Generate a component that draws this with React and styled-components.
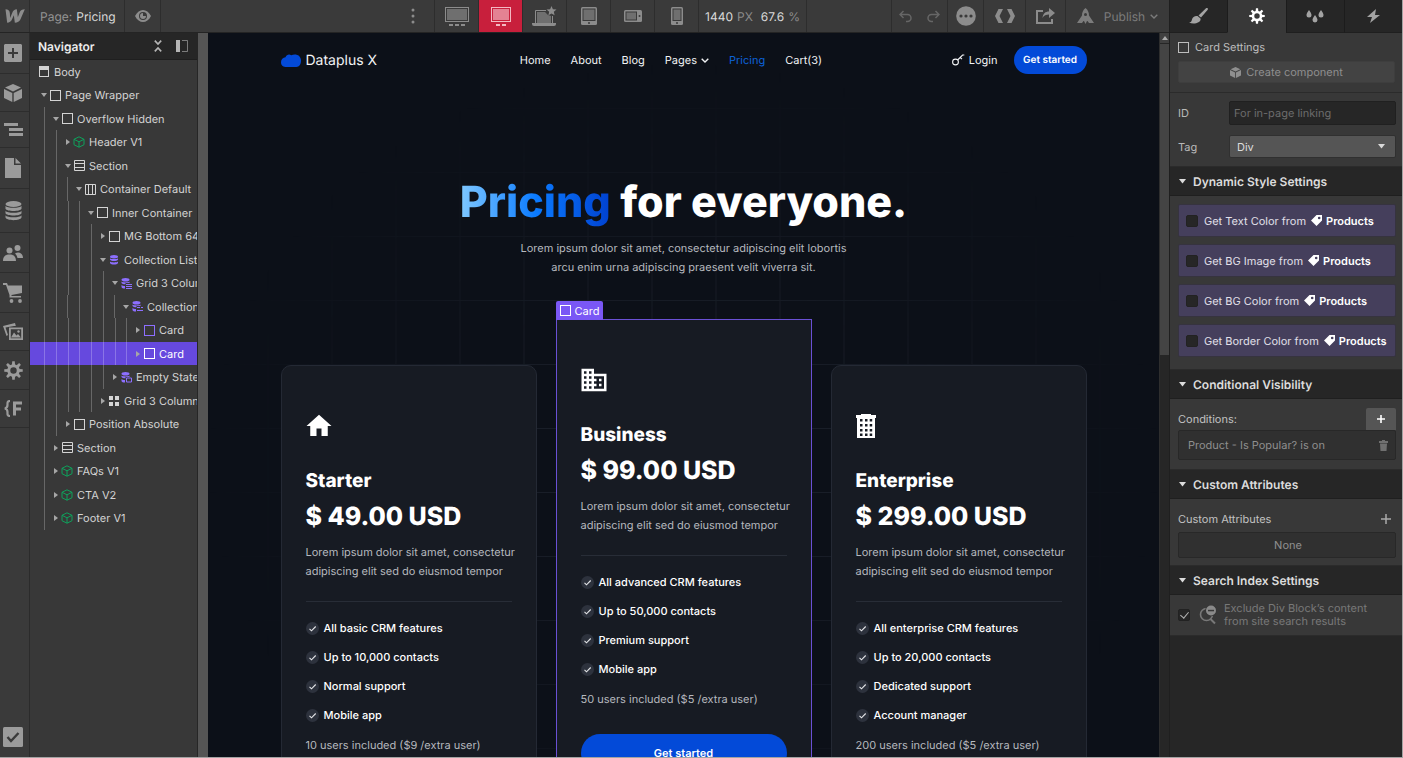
import React from "react"
import styled, { createGlobalStyle, css } from "styled-components"
import { MdHome, MdBusiness } from "react-icons/md"

const GlobalStyle = createGlobalStyle`
  * {
    box-sizing: border-box;
  }

  body {
    margin: 0;
    background-color: #a3a3a3;
    font-family: Inter, "Liberation Sans", sans-serif;
    font-size: 11px;
    color: #d9d9d9;
    text-rendering: geometricPrecision;
  }

  button,
  input,
  select {
    font-family: inherit;
    font-size: inherit;
    color: inherit;
    margin: 0;
    text-rendering: inherit;
  }

  svg {
    display: block;
    flex-shrink: 0;
  }
`

const plainButton = css`
  display: flex;
  align-items: center;
  justify-content: center;
  padding: 0;
  border: 0;
  background: none;
  cursor: pointer;
`

const Shell = styled.div`
  display: flex;
  height: 100vh;
  padding: 0 1px 1px 0;
  overflow: hidden;
`

const Main = styled.div`
  flex: 1;
  min-width: 0;
  display: flex;
  flex-direction: column;
`

const Workspace = styled.div`
  flex: 1;
  min-height: 0;
  display: flex;
`

/* Top bar */

const TopBar = styled.header`
  display: flex;
  height: 33px;
  background-color: #3a3a3a;
  border-bottom: 1px solid #242424;
`

const TopButton = styled.button`
  ${plainButton}
  width: ${(props) => props.$width}px;
  gap: 8px;
  color: ${(props) => (props.$active ? "#f3b8c2" : "#8c8c8c")};
  background-color: ${(props) => (props.$active ? "#c81f3c" : "transparent")};
  border-right: 1px solid #2d2d2d;
`

const PageName = styled.div`
  display: flex;
  align-items: center;
  gap: 4px;
  width: 95px;
  padding-left: 10px;
  font-size: 12px;
  color: #949494;
  border-right: 1px solid #2d2d2d;

  & strong {
    font-weight: 400;
    color: #d9d9d9;
  }
`

const TopSpace = styled.div`
  flex: 1;
  display: flex;
  justify-content: flex-end;
  border-right: 1px solid #2d2d2d;
`

const MoreButton = styled.button`
  ${plainButton}
  width: 43px;
  color: #8c8c8c;
`

const TopGap = styled.div`
  width: 85px;
  border-right: 1px solid #2d2d2d;
`

const Dimensions = styled.div`
  display: flex;
  align-items: center;
  justify-content: center;
  gap: 4px;
  width: 108px;
  font-size: 12px;
  color: #d9d9d9;
  border-right: 1px solid #2d2d2d;

  & span {
    color: #8c8c8c;
  }

  & span + b {
    margin-left: 4px;
  }

  & b {
    font-weight: 400;
  }
`

const History = styled.div`
  display: flex;
  width: 56px;
  border-right: 1px solid #2d2d2d;
`

const HistoryButton = styled.button`
  ${plainButton}
  flex: 1;
  color: #666;
`

const PublishButton = styled.button`
  ${plainButton}
  gap: 5px;
  width: 103px;
  font-size: 12px;
  color: #7c7c7c;

  & span {
    margin-left: 5px;
  }
`

/* Left rail */

const Rail = styled.nav`
  display: flex;
  flex-direction: column;
  width: 30px;
  background-color: #3a3a3a;
  border-right: 1px solid #2b2b2b;
`

const RailButton = styled.button`
  ${plainButton}
  height: ${(props) => props.$height}px;
  padding-right: 3px;
  color: #9b9b9b;
  border-bottom: ${(props) => (props.$last ? "0" : "1px solid #2d2d2d")};
`

const RailSpace = styled.div`
  flex: 1;
`

/* Navigator */

const Navigator = styled.aside`
  width: 168px;
  background-color: #383838;
  border-right: 1px solid #262626;
  overflow: hidden;
`

const NavigatorHeader = styled.div`
  display: flex;
  align-items: center;
  height: 27px;
  padding: 0 9px 0 8px;
  background-color: #262626;
  border-bottom: 1px solid #1f1f1f;
`

const NavigatorTitle = styled.h2`
  flex: 1;
  margin: 0;
  font-size: 12px;
  font-weight: 600;
  color: #ececec;
`

const NavigatorTools = styled.div`
  display: flex;
  gap: 14px;

  & button {
    ${plainButton}
    color: #b5b5b5;
  }
`

const Tree = styled.ul`
  margin: 0;
  padding: 0;
  list-style: none;
`

const TreeRow = styled.li`
  display: flex;
  align-items: center;
  height: 23px;
  padding-left: ${(props) => (props.$depth ? 11 : 8)}px;
  white-space: nowrap;
  background-color: ${(props) => (props.$selected ? "#6649de" : "transparent")};
  color: ${(props) => (props.$selected ? "#fff" : "#d4d4d4")};
  cursor: default;

  &:nth-child(even) {
    height: 24px;
  }
`

const Guides = styled.span`
  display: flex;
  flex-shrink: 0;
  align-self: stretch;
  width: ${(props) => Math.round((props.$count * 47) / 4)}px;
`

const Guide = styled.span`
  flex: 1;

  &::before {
    content: "";
    display: block;
    width: 1px;
    height: 100%;
    margin-left: 3px;
    background-color: rgba(255, 255, 255, 0.24);
  }
`

const Caret = styled.span`
  display: flex;
  flex-shrink: 0;
  justify-content: center;
  width: 6px;
  margin-right: 2px;
  color: #a6a6a6;
`

const TreeIcon = styled.span`
  display: flex;
  flex-shrink: 0;
  justify-content: center;
  width: 12px;
  margin-right: 4px;
  color: ${(props) => props.$color || "inherit"};
`

const Gutter = styled.div`
  width: 10px;
  background-color: #555;
`

/* Canvas */

const Canvas = styled.main`
  position: relative;
  flex: 1;
  min-width: 0;
  overflow: hidden;
  background-color: #0c1018;
  color: #fff;

  &::before {
    content: "";
    position: absolute;
    inset: 0;
    background-image: linear-gradient(to right, #191e28 1px, transparent 1px),
      linear-gradient(to bottom, #191e28 1px, transparent 1px);
    background-size: 64px 64px;
    background-position: 50% 11px;
    mask-image: radial-gradient(
      ellipse 500px 420px at 50% 430px,
      #000 30%,
      transparent 95%
    );
  }
`

const Site = styled.div`
  position: relative;
  max-width: 806px;
  margin: 0 auto;
`

const SiteHeader = styled.header`
  display: flex;
  align-items: center;
  justify-content: space-between;
  height: 54px;
`

const Logo = styled.a`
  display: flex;
  align-items: center;
  gap: 5px;
  font-size: 14px;
  color: #f2f3f5;
  text-decoration: none;
`

const SiteNav = styled.nav`
  display: flex;
  gap: 20px;
  margin-left: 13px;
`

const SiteLink = styled.a`
  display: flex;
  align-items: center;
  gap: 4px;
  font-size: 11px;
  color: ${(props) => (props.$current ? "#0d62d8" : "#f2f3f5")};
  text-decoration: none;
`

const SiteActions = styled.div`
  display: flex;
  align-items: center;
  gap: 16px;
`

const PillButton = styled.button`
  ${plainButton}
  width: ${(props) => (props.$wide ? "100%" : "73px")};
  height: ${(props) => (props.$wide ? 38 : 28)}px;
  border-radius: 40px;
  background-color: #034ad8;
  color: #fff;
  font-size: ${(props) => (props.$wide ? 11 : 10)}px;
  font-weight: 600;
`

const Hero = styled.section`
  padding-top: 88px;
  text-align: center;
`

const HeroTitle = styled.h1`
  margin: 0;
  font-size: 43px;
  font-weight: 800;
  line-height: 54px;

  & span {
    background-image: linear-gradient(
      to right,
      #7fc8ff,
      #0b7bff 50%,
      #0041d0
    );
    background-clip: text;
    color: transparent;
  }
`

const HeroText = styled.p`
  max-width: 330px;
  margin: 10px auto 0;
  font-size: 11px;
  line-height: 19px;
  color: #b6b9bf;
`

const Cards = styled.section`
  display: grid;
  grid-template-columns: repeat(3, 1fr);
  align-items: start;
  gap: 19px;
  margin-top: 42px;
`

const Card = styled.article`
  position: relative;
  margin-top: ${(props) => (props.$selected ? 0 : 46)}px;
  padding: 44px 24px 40px;
  background-color: #171b23;
  border: 1px solid ${(props) => (props.$selected ? "#6a50d4" : "#242934")};
  border-radius: ${(props) => (props.$selected ? 0 : 10)}px;
`

const SelectionLabel = styled.div`
  position: absolute;
  left: -1px;
  bottom: 100%;
  display: flex;
  align-items: center;
  gap: 4px;
  height: 19px;
  padding: 0 4px;
  background-color: #7a57f5;
  border-radius: 2px 2px 0 0;
  font-size: 11px;
`

const PlanIcon = styled.div`
  display: flex;
  align-items: center;
  height: 32px;
  margin-left: -${(props) => props.$bleed}px;
`

const PlanName = styled.h2`
  margin: 25px 0 0;
  font-size: 19px;
  font-weight: 800;
  line-height: 28px;
`

const PlanPrice = styled.div`
  margin-top: 2px;
  font-size: 25px;
  font-weight: 800;
  line-height: 40px;
`

const PlanText = styled.p`
  margin: 6px -12px 0 0;
  line-height: 19px;
  color: #b6b9bf;
`

const Divider = styled.hr`
  height: 1px;
  margin: 20px 0 18px;
  border: 0;
  background-color: #282d37;
`

const Features = styled.ul`
  display: grid;
  gap: 13px;
  margin: 0;
  padding: 0;
  list-style: none;
`

const Feature = styled.li`
  display: flex;
  align-items: center;
  gap: 5px;
  line-height: 16px;
  font-weight: 500;
`

const PlanUsers = styled.p`
  margin: 13px 0 25px;
  line-height: 19px;
  color: #b6b9bf;
`

const Scrollbar = styled.div`
  display: flex;
  flex-direction: column;
  width: 10px;
  background-color: #262626;
  border-left: 1px solid #2e2e2e;
`

const ScrollArrow = styled.div`
  display: flex;
  align-items: center;
  justify-content: center;
  height: 11px;
  color: #aaa;
  background-color: #404040;
  border-bottom: 1px solid #262626;
`

const ScrollThumb = styled.div`
  height: 43%;
  background-color: #444;
`

/* Settings panel */

const Settings = styled.aside`
  display: flex;
  flex-direction: column;
  width: 233px;
  background-color: #262626;
  border-left: 1px solid #1f1f1f;
`

const Tabs = styled.div`
  display: flex;
  height: 33px;
`

const Tab = styled.button`
  ${plainButton}
  flex: 1;
  color: ${(props) => (props.$active ? "#fff" : "#a3a3a3")};
  background-color: ${(props) => (props.$active ? "#383838" : "#262626")};
  border-bottom: 1px solid ${(props) => (props.$active ? "#383838" : "#1f1f1f")};

  & + & {
    border-left: 1px solid #1c1c1c;
  }
`

const Panel = styled.div`
  padding: ${(props) => props.$pad};
  background-color: #383838;
  border-bottom: 1px solid #2b2b2b;
`

const PanelTitle = styled.div`
  display: flex;
  align-items: center;
  gap: 6px;
  height: 14px;
  color: #bdbdbd;
`

const CreateButton = styled.button`
  ${plainButton}
  gap: 5px;
  width: 100%;
  height: 22px;
  margin-top: 7px;
  color: #8f8f8f;
  background-color: #434343;
  border: 1px solid #3e3e3e;
  border-radius: 2px;
`

const Field = styled.div`
  display: grid;
  grid-template-columns: 51px 1fr;
  align-items: center;

  & + & {
    margin-top: 10px;
  }

  & label {
    color: #b8b8b8;
  }
`

const TextInput = styled.input`
  width: 100%;
  height: 24px;
  padding: 0 4px;
  background-color: #262626;
  border: 1px solid #202020;
  border-radius: 2px;

  &::placeholder {
    color: #6c6c6c;
  }
`

const SelectBox = styled.div`
  display: grid;
  grid-template-columns: 1fr 18px;
  align-items: center;

  & select {
    grid-area: 1 / 1 / 2 / 3;
    width: 100%;
    height: 23px;
    padding: 0 7px;
    appearance: none;
    background-color: #555;
    border: 1px solid #303030;
    border-radius: 2px;
    color: #dcdcdc;
  }

  & svg {
    grid-area: 1 / 2 / 2 / 3;
    pointer-events: none;
  }
`

const SectionHeader = styled.button`
  ${plainButton}
  justify-content: flex-start;
  gap: 7px;
  width: 100%;
  height: 29px;
  padding-left: 9px;
  background-color: #262626;
  border-bottom: 1px solid #1f1f1f;
  font-size: 12px;
  font-weight: 600;
  color: #dcdcdc;
`

const StyleRows = styled.div`
  display: grid;
  gap: 7px;
`

const StyleRow = styled.label`
  display: flex;
  align-items: center;
  height: 33px;
  padding-left: 7px;
  background-color: #453f5c;
  border: 1px solid #36333f;
  border-radius: 2px;
  color: #e2e0ea;

  & svg {
    margin: 0 4px 0 5px;
    color: #fff;
  }

  & strong {
    font-weight: 600;
    color: #fff;
  }
`

const Checkbox = styled.input`
  display: flex;
  align-items: center;
  justify-content: center;
  flex-shrink: 0;
  width: 12px;
  height: 12px;
  margin-right: 6px;
  appearance: none;
  background-color: #262626;
  border: 1px solid #222;
  border-radius: 2px;

  &:checked::after {
    content: "";
    width: 4px;
    height: 7px;
    border: solid #b5b5b5;
    border-width: 0 1px 1px 0;
    transform: translateY(-1px) rotate(40deg);
  }
`

const LabelRow = styled.div`
  display: flex;
  align-items: center;
  justify-content: space-between;
  height: 22px;
  color: #c2c2c2;
`

const AddButton = styled.button`
  ${plainButton}
  width: ${(props) => (props.$filled ? 30 : 20)}px;
  height: 22px;
  background-color: ${(props) => (props.$filled ? "#555" : "transparent")};
  border-radius: 2px 2px 0 0;
  color: ${(props) => (props.$filled ? "#fff" : "#a9a9a9")};
`

const Well = styled.div`
  display: flex;
  align-items: center;
  justify-content: ${(props) => (props.$center ? "center" : "space-between")};
  height: ${(props) => (props.$center ? 26 : 30)}px;
  margin-top: ${(props) => (props.$center ? 2 : 0)}px;
  padding: 0 7px 0 9px;
  background-color: #303030;
  border: 1px solid #282828;
  border-radius: 2px;
  color: #8f8f8f;

  & button {
    ${plainButton}
    color: #707070;
  }
`

const Exclude = styled.label`
  display: flex;
  align-items: center;
  line-height: 13px;
  color: #787878;

  & svg {
    margin: 0 7px 0 3px;
  }
`

/* Icons */

const Icon = ({ w, h = w, box, children }) => (
  <svg
    width={w}
    height={h}
    viewBox={box || `0 0 ${w} ${h}`}
    fill="currentColor"
    aria-hidden="true"
  >
    {children}
  </svg>
)

const WIcon = () => (
  <Icon w={20} h={14} box="14 29 59 42">
    <path d="M15 30C23 30 27 34 28 41L29 56L35 41C38 34 42 30 49 30L52 54L57 40C60 33 65 30 73 30L60 60C57 67 51 70 43 70L40 48L35 59C32 67 26 70 20 70Z" />
  </Icon>
)

const EyeIcon = () => (
  <Icon w={16} h={12}>
    <path
      fillRule="evenodd"
      d="M0 6C2 2 5 0 8 0s6 2 8 6c-2 4-5 6-8 6S2 10 0 6Zm8-4a4 4 0 1 0 0 8 4 4 0 0 0 0-8Z"
    />
    <path d="M8 3a3 3 0 1 0 3 3H8Z" />
  </Icon>
)

const DotsIcon = () => (
  <Icon w={4} h={16}>
    <circle cx="2" cy="2" r="1.5" />
    <circle cx="2" cy="8" r="1.5" />
    <circle cx="2" cy="14" r="1.5" />
  </Icon>
)

const Screen = ({ w, h }) => (
  <>
    <rect
      x=".5"
      y=".5"
      width={w - 1}
      height={h - 1}
      fill="none"
      stroke="currentColor"
    />
    <rect x="2" y="2" width={w - 4} height={h - 4} opacity=".65" />
  </>
)

const WideIcon = () => (
  <Icon w={24} h={19}>
    <Screen w={24} h={15} />
    <path d="M4 17h4v2H4zM10 17h4v2h-4zM16 17h4v2h-4z" />
  </Icon>
)

const DesktopIcon = () => (
  <Icon w={20} h={19}>
    <Screen w={20} h={15} />
    <path d="M5 17h4v2H5zM11 17h4v2h-4z" />
  </Icon>
)

const LaptopIcon = () => (
  <Icon w={25} h={21}>
    <path d="M3.5 17V4.5H14M20.5 10v7" fill="none" stroke="currentColor" />
    <path d="M5 6h8l3 3 3 1v7H5z" opacity=".65" />
    <path d="M0 17h24v1a2 2 0 0 1-2 2H2a2 2 0 0 1-2-2z" />
    <path d="m19.5 0 1.4 3.2 3.6.3-2.7 2.3.8 3.5-3.1-1.9-3.1 1.9.8-3.5-2.7-2.3 3.6-.3z" />
  </Icon>
)

const TabletIcon = () => (
  <Icon w={16} h={18}>
    <rect width="16" height="18" rx="1.5" />
    <rect x="1.5" y="1.5" width="13" height="12.5" fill="#3a3a3a" />
    <rect x="2.5" y="2.5" width="11" height="10.5" opacity=".65" />
    <circle cx="8" cy="15.9" r="1" fill="#3a3a3a" />
  </Icon>
)

const LandscapeIcon = () => (
  <Icon w={18} h={12}>
    <rect width="18" height="12" rx="1.5" />
    <rect x="1.5" y="1.5" width="11.5" height="9" fill="#3a3a3a" />
    <rect x="2.5" y="2.5" width="9.5" height="7" opacity=".65" />
    <circle cx="15.5" cy="6" r="1" fill="#3a3a3a" />
  </Icon>
)

const PhoneIcon = () => (
  <Icon w={12} h={18}>
    <rect width="12" height="18" rx="1.5" />
    <rect x="1.5" y="1.5" width="9" height="12.5" fill="#3a3a3a" />
    <rect x="2.5" y="2.5" width="7" height="10.5" opacity=".65" />
    <circle cx="6" cy="15.9" r="1" fill="#3a3a3a" />
  </Icon>
)

const UndoIcon = ({ flip }) => (
  <Icon w={13} h={13}>
    <g transform={flip ? "translate(13 0) scale(-1 1)" : undefined}>
      <path
        d="M4.5 1 1 4.5 4.5 8M1.5 4.5h7a3.5 3.5 0 0 1 0 7H7"
        fill="none"
        stroke="currentColor"
        strokeWidth="1.5"
      />
    </g>
  </Icon>
)

const ChatIcon = () => (
  <Icon w={20}>
    <circle cx="10" cy="10" r="9.8" />
    <circle cx="5" cy="10" r="1.6" fill="#3a3a3a" />
    <circle cx="10" cy="10" r="1.6" fill="#3a3a3a" />
    <circle cx="15" cy="10" r="1.6" fill="#3a3a3a" />
  </Icon>
)

const CodeIcon = () => (
  <Icon w={20} h={14}>
    <path d="M3.5 0H8L4.500 7 8 14H3.500L0 7zM16.500 0H12l3.500 7-3.500 7h4.500L20 7z" />
  </Icon>
)

const ExportIcon = () => (
  <Icon w={19} h={16}>
    <path
      d="M7 3H1v12h15v-4"
      fill="none"
      stroke="currentColor"
      strokeWidth="2"
    />
    <path d="M13 0l6 5-6 5V6.5c-3 0-5 .5-6.5 3.5C7 5.5 9.5 3.5 13 3.5z" />
  </Icon>
)

const RocketIcon = () => (
  <Icon w={17} h={16}>
    <path
      fillRule="evenodd"
      d="M8.5 0C11 2 12 4.5 12 7.5l5 7.5h-5l-1.5-2h-4L5 15H0l5-7.5C5 4.5 6 2 8.5 0Zm0 5a1.5 1.5 0 1 0 0 3 1.5 1.5 0 0 0 0-3Z"
    />
    <path d="M7 13h3l-1.5 3z" />
  </Icon>
)

const ChevronIcon = () => (
  <Icon w={8} h={5}>
    <path
      d="m.7.7 3.3 3.3L7.3.7"
      fill="none"
      stroke="currentColor"
      strokeWidth="1.4"
    />
  </Icon>
)

const AddIcon = () => (
  <Icon w={18}>
    <path
      fillRule="evenodd"
      d="M1 0h16l1 1v16l-1 1H1l-1-1V1zm7 4v4H4v2h4v4h2v-4h4V8h-4V4z"
    />
  </Icon>
)

const BoxIcon = ({ size = 18 }) => (
  <Icon w={size} box="0 0 18 18">
    <path d="M9 0l8 3.5L9 7.5 1 3.5zM0 5l8.300 4v9L0 14zM18 5l-8.300 4v9L18 14z" />
  </Icon>
)

const LinesIcon = () => (
  <Icon w={19} h={13}>
    <path d="M0 0h14v3H0zM5 5h14v3H5zM5 10h14v3H5z" />
  </Icon>
)

const FileIcon = () => (
  <Icon w={16} h={20}>
    <path d="M0 0h9v7h7v13H0zM10.5 0 16 5.5h-5.5z" />
  </Icon>
)

const DatabaseIcon = () => (
  <Icon w={17} h={20}>
    <ellipse cx="8.5" cy="3" rx="8" ry="3" />
    <path d="M.5 4.8c1.5 2.7 14.5 2.7 16 0v3c-1 3-15 3-16 0zM.5 9.8c1.5 2.7 14.5 2.7 16 0v2.5c-1 3-15 3-16 0zM.5 14.3c1.5 2.7 14.5 2.7 16 0v2.2c-1 3.500-15 3.500-16 0z" />
  </Icon>
)

const UsersIcon = () => (
  <Icon w={20} h={16}>
    <circle cx="6.5" cy="5.5" r="3" />
    <circle cx="14.5" cy="3" r="3" />
    <path d="M0 16c0-4.5 2.5-6.5 6.5-6.5S13 11.5 13 16zM12 8.5c4-2.5 8 0 8 4.5h-5.5c-.4-1.8-1.2-3.4-2.5-4.5z" />
  </Icon>
)

const CartIcon = () => (
  <Icon w={20} h={20}>
    <path d="M0 0h4l1 2.5h14V10l-10.5 2v1H18v1.5H6.500V12L3 2H0z" />
    <circle cx="8.5" cy="18" r="1.9" />
    <circle cx="17" cy="18" r="1.9" />
  </Icon>
)

const ImagesIcon = () => (
  <Icon w={20} h={17}>
    <path d="M0 3 12 0l.8 3H11L2.5 4.5 5 12l-1.5 1z" />
    <path fillRule="evenodd" d="M6 4.5h14V17H6zm1.8 1.8v8.9h10.4V6.3z" />
    <path d="M8 14.5l3-5 2.5 3 1.5-1.5 3 3.5z" />
    <circle cx="15.5" cy="8.5" r="1.2" />
  </Icon>
)

const GearIcon = ({ size = 19 }) => (
  <Icon w={size} box="0 0 20 20">
    <circle
      cx="10"
      cy="10"
      r="5"
      fill="none"
      stroke="currentColor"
      strokeWidth="3.2"
    />
    {[0, 45, 90, 135, 180, 225, 270, 315].map((angle) => (
      <path
        key={angle}
        d="M8.3 4.5 8.7.3h2.6l.4 4.2z"
        transform={`rotate(${angle} 10 10)`}
      />
    ))}
  </Icon>
)

const FinsweetIcon = () => (
  <Icon w={19} h={17}>
    <path
      d="M6 1C3 1 3.5 3 3.5 5S3 8 .8 8.5C3 9 3.5 10 3.5 12S3 16 6 16"
      fill="none"
      stroke="currentColor"
      strokeWidth="2.2"
    />
    <path d="M9 1.5h9v3h-6v3h5v3h-5v5H9z" />
  </Icon>
)

const AuditIcon = () => (
  <Icon w={20}>
    <rect width="20" height="20" rx="1.5" />
    <path
      d="m4.5 10 3.5 4 7.5-8"
      fill="none"
      stroke="#3a3a3a"
      strokeWidth="2.4"
    />
  </Icon>
)

const CollapseIcon = () => (
  <Icon w={8} h={12}>
    <path
      d="M.8.6 4 4 7.2.6M.8 11.4 4 8l3.2 3.4"
      fill="none"
      stroke="currentColor"
      strokeWidth="1.6"
    />
  </Icon>
)

const PinIcon = () => (
  <Icon w={12}>
    <path d="M0 0h4v12H0z" />
    <path d="M6 .5h5.5v11H6" fill="none" stroke="currentColor" opacity=".6" />
  </Icon>
)

const CaretIcon = ({ open }) => (
  <Icon w={open ? 6 : 4} h={open ? 4 : 6}>
    <path d={open ? "M0 0h6L3 4z" : "M0 0v6l4-3z"} />
  </Icon>
)

const TriangleIcon = () => (
  <Icon w={7} h={5}>
    <path d="M0 0h7L3.500 4.500z" />
  </Icon>
)

const SquareIcon = () => (
  <Icon w={11}>
    <rect
      x=".5"
      y=".5"
      width="10"
      height="10"
      fill="none"
      stroke="currentColor"
    />
  </Icon>
)

const BodyIcon = () => (
  <Icon w={10} h={11}>
    <rect
      x=".5"
      y=".5"
      width="9"
      height="10"
      fill="none"
      stroke="currentColor"
    />
    <path d="M0 0h2v1h1V0h2v1h1V0h4v4H0z" />
  </Icon>
)

const SectionIcon = () => (
  <Icon w={11}>
    <path
      d="M.5.5h10v10H.5zM.5 3.5h10M.5 7.5h10"
      fill="none"
      stroke="currentColor"
    />
  </Icon>
)

const ContainerIcon = () => (
  <Icon w={11}>
    <path
      d="M.5.5h10v10H.5zM3.5.5v10M7.5.5v10"
      fill="none"
      stroke="currentColor"
    />
  </Icon>
)

const ComponentIcon = () => (
  <Icon w={12}>
    <path
      d="M6 .8 11 3.3v5.4L6 11.2 1 8.700V3.3zM1 3.3l5 2.5 5-2.5M6 5.8v5.4"
      fill="none"
      stroke="currentColor"
      strokeLinejoin="round"
    />
  </Icon>
)

const ListIcon = () => (
  <Icon w={10}>
    <ellipse cx="5" cy="1.7" rx="4" ry="1.7" />
    <path d="M1 3.2c1 1.2 7 1.2 8 0v1.6c-1 1.6-7 1.6-8 0zM1 6.5c1 1.2 7 1.2 8 0v1.6c-1 2-7 2-8 0z" />
  </Icon>
)

const ListPartIcon = ({ part }) => (
  <Icon w={11}>
    <ellipse cx="4.5" cy="1.8" rx="4" ry="1.8" />
    <path d="M.5 3.5c1 1.2 7 1.2 8 0V5h-4v1.3c-2 0-3.5-.4-4-1.3zM.5 7c.8.8 2 1 3.5 1v2.5C2 10.5.8 10 .5 9z" />
    {part === "lines" && <path d="M5 6h6v1H5zM5 8h6v1H5zM5 10h6v1H5z" />}
    {part === "item" && <path d="M5 6h3v1H5zM5 9h6v1H5zM9 6h2v1H9z" />}
    {part === "empty" && (
      <path d="M5.500 6h5v4h-5z" fill="#383838" stroke="currentColor" />
    )}
  </Icon>
)

const GridIcon = () => (
  <Icon w={10}>
    <path d="M0 0h4v4H0zM6 0h4v4H6zM0 6h4v4H0zM6 6h4v4H6z" />
  </Icon>
)

const CloudIcon = () => (
  <Icon w={20} h={13}>
    <path
      fill="#034ad8"
      d="M4.5 3.2C5.5.8 8-.2 10.2 1.2 14.5-.8 20 1 20 6.5S17 13 14.5 13h-9C2.5 13 0 11.5 0 8.2 0 5.5 2 3.5 4.5 3.2Z"
    />
  </Icon>
)

const KeyIcon = () => (
  <Icon w={13} h={12}>
    <g fill="none" stroke="currentColor" strokeWidth="1.1">
      <circle cx="3.5" cy="8" r="2.9" />
      <path d="m5.600 6 5-5h1.700M8.200 3.500l1.800 1.600" />
    </g>
  </Icon>
)

const TowerIcon = () => (
  <Icon w={20} h={24}>
    <path
      fillRule="evenodd"
      d="M5 0h10v1h5v3h-1v20H1V4H0V1h5zM4 5v2.500h2.500V5zm5 0v2.500h2.500V5zm4.700 0v2.500h2.500V5zM4 10v2.500h2.500V10zm5 0v2.500h2.500V10zm4.700 0v2.500h2.500V10zM4 15v2.500h2.500V15zm5 0v2.500h2.500V15zm4.700 0v2.500h2.500V15zM4 19.500V22h2.500v-2.500zm5 0V22h2.500v-2.500zm4.700 0V22h2.500v-2.500z"
    />
  </Icon>
)

const CheckIcon = () => (
  <Icon w={13}>
    <circle cx="6.5" cy="6.5" r="6.5" fill="#2d323d" />
    <path
      d="m3.5 6.8 2 2 4.2-4.3"
      fill="none"
      stroke="#e4e5e8"
      strokeWidth="1.1"
    />
  </Icon>
)

const BrushIcon = () => (
  <Icon w={19} h={16}>
    <path d="M18.500 0c.6.700.5 1.500-.2 2.200L12 9.500 9.500 7.500 16.500.8c.7-.8 1.400-1.200 2-.8zM8.500 8l3 2.500c1 4-6.500 6.500-11.500 4 2-.2 2.500-1 3-3C3.500 9 6 7.500 8.500 8z" />
  </Icon>
)

const DropsIcon = () => (
  <Icon w={18} h={14}>
    <path d="M3 1c1.500 2.200 2.500 3.700 2.500 5a2.500 2.500 0 0 1-5 0C.5 4.700 1.500 3.200 3 1zM15 1c1.500 2.200 2.500 3.700 2.500 5a2.500 2.500 0 0 1-5 0c0-1.300 1-2.800 2.500-5zM9 6c1.500 2.200 2.500 3.700 2.500 5a2.500 2.500 0 0 1-5 0c0-1.300 1-2.800 2.500-5z" />
  </Icon>
)

const BoltIcon = () => (
  <Icon w={13} h={14}>
    <path d="M9 0 0 8h5l-2 6 10-8H8z" />
  </Icon>
)

const TagIcon = () => (
  <Icon w={11}>
    <path
      fillRule="evenodd"
      d="M5.500 0H11v5.500L5.500 11 4 9.500 0 5.500zm2.700 1.700a1.300 1.300 0 1 0 0 2.600 1.300 1.300 0 0 0 0-2.600z"
    />
  </Icon>
)

const PlusIcon = ({ size, stroke }) => (
  <Icon w={size} box="0 0 10 10">
    <path d="M5 0v10M0 5h10" stroke="currentColor" strokeWidth={stroke} />
  </Icon>
)

const TrashIcon = () => (
  <Icon w={9} h={11}>
    <path d="M3 0h3v1h3v2H0V1h3zM1 3.500h7L7.500 11h-6z" />
  </Icon>
)

const SearchOffIcon = () => (
  <Icon w={18} h={20}>
    <circle
      cx="7.5"
      cy="9.5"
      r="6"
      fill="none"
      stroke="currentColor"
      strokeWidth="1.6"
    />
    <path d="m11.500 14 4.500 4.500" stroke="currentColor" strokeWidth="2" />
    <circle cx="12" cy="5.5" r="5.8" fill="#383838" />
    <circle cx="12" cy="5.5" r="5" fill="#8a8a8a" />
    <path d="M9 4.800h6v1.500H9z" fill="#383838" />
  </Icon>
)

/* Data */

const DEVICES = [
  { name: "1920px and up", icon: <WideIcon /> },
  { name: "1440px and up", icon: <DesktopIcon />, active: true },
  { name: "Base breakpoint", icon: <LaptopIcon /> },
  { name: "Tablet", icon: <TabletIcon /> },
  { name: "Mobile landscape", icon: <LandscapeIcon /> },
  { name: "Mobile portrait", icon: <PhoneIcon /> },
]

const RAIL = [
  { name: "Add", icon: <AddIcon />, height: 41 },
  { name: "Components", icon: <BoxIcon />, height: 38 },
  { name: "Navigator", icon: <LinesIcon />, height: 36 },
  { name: "Pages", icon: <FileIcon />, height: 41 },
  { name: "CMS", icon: <DatabaseIcon />, height: 44 },
  { name: "Users", icon: <UsersIcon />, height: 40 },
  { name: "Ecommerce", icon: <CartIcon />, height: 40 },
  { name: "Assets", icon: <ImagesIcon />, height: 38 },
  { name: "Settings", icon: <GearIcon />, height: 39 },
  { name: "Finsweet", icon: <FinsweetIcon />, height: 38 },
]

const GREEN = "#0fa15c"
const PURPLE = "#8d6fff"

const LAYERS = [
  { name: "Body", depth: 0, icon: <BodyIcon /> },
  { name: "Page Wrapper", depth: 1, icon: <SquareIcon />, open: true },
  { name: "Overflow Hidden", depth: 2, icon: <SquareIcon />, open: true },
  { name: "Header V1", depth: 3, icon: <ComponentIcon />, color: GREEN },
  { name: "Section", depth: 3, icon: <SectionIcon />, open: true },
  { name: "Container Default", depth: 4, icon: <ContainerIcon />, open: true },
  { name: "Inner Container", depth: 5, icon: <SquareIcon />, open: true },
  { name: "MG Bottom 64", depth: 6, icon: <SquareIcon /> },
  {
    name: "Collection List",
    depth: 6,
    icon: <ListIcon />,
    color: PURPLE,
    open: true,
  },
  {
    name: "Grid 3 Columns",
    depth: 7,
    icon: <ListPartIcon part="lines" />,
    color: PURPLE,
    open: true,
  },
  {
    name: "Collection Item",
    depth: 8,
    icon: <ListPartIcon part="item" />,
    color: PURPLE,
    open: true,
  },
  { name: "Card", depth: 9, icon: <SquareIcon />, color: PURPLE },
  { name: "Card", depth: 9, icon: <SquareIcon />, selected: true },
  {
    name: "Empty State",
    depth: 7,
    icon: <ListPartIcon part="empty" />,
    color: PURPLE,
  },
  { name: "Grid 3 Column", depth: 6, icon: <GridIcon /> },
  { name: "Position Absolute", depth: 3, icon: <SquareIcon /> },
  { name: "Section", depth: 2, icon: <SectionIcon /> },
  { name: "FAQs V1", depth: 2, icon: <ComponentIcon />, color: GREEN },
  { name: "CTA V2", depth: 2, icon: <ComponentIcon />, color: GREEN },
  { name: "Footer V1", depth: 2, icon: <ComponentIcon />, color: GREEN },
]

const PLANS = [
  {
    name: "Starter",
    price: "$ 49.00 USD",
    icon: <MdHome size={30} />,
    bleed: 2,
    features: [
      "All basic CRM features",
      "Up to 10,000 contacts",
      "Normal support",
      "Mobile app",
    ],
    users: "10 users included ($9 /extra user)",
  },
  {
    name: "Business",
    price: "$ 99.00 USD",
    icon: <MdBusiness size={30} />,
    bleed: 2,
    features: [
      "All advanced CRM features",
      "Up to 50,000 contacts",
      "Premium support",
      "Mobile app",
    ],
    users: "50 users included ($5 /extra user)",
    selected: true,
  },
  {
    name: "Enterprise",
    price: "$ 299.00 USD",
    icon: <TowerIcon />,
    bleed: 0,
    features: [
      "All enterprise CRM features",
      "Up to 20,000 contacts",
      "Dedicated support",
      "Account manager",
    ],
    users: "200 users included ($5 /extra user)",
  },
]

const DYNAMIC_STYLES = ["Text Color", "BG Image", "BG Color", "Border Color"]

const Toolbar = () => (
  <TopBar>
    <TopButton $width={30} aria-label="Menu">
      <WIcon />
    </TopButton>
    <PageName>
      Page: <strong>Pricing</strong>
    </PageName>
    <TopButton $width={36} aria-label="Preview">
      <EyeIcon />
    </TopButton>
    <TopSpace>
      <MoreButton aria-label="More">
        <DotsIcon />
      </MoreButton>
    </TopSpace>
    {DEVICES.map((device) => (
      <TopButton
        key={device.name}
        $width={44}
        $active={device.active}
        aria-label={device.name}
      >
        {device.icon}
      </TopButton>
    ))}
    <Dimensions>
      <b>1440</b>
      <span>PX</span>
      <b>67.6</b>
      <span>%</span>
    </Dimensions>
    <TopGap />
    <History>
      <HistoryButton aria-label="Undo">
        <UndoIcon />
      </HistoryButton>
      <HistoryButton aria-label="Redo">
        <UndoIcon flip />
      </HistoryButton>
    </History>
    <TopButton $width={36} aria-label="Comments">
      <ChatIcon />
    </TopButton>
    <TopButton $width={42} aria-label="Export code">
      <CodeIcon />
    </TopButton>
    <TopButton $width={40} aria-label="Share">
      <ExportIcon />
    </TopButton>
    <PublishButton>
      <RocketIcon />
      <span>Publish</span>
      <ChevronIcon />
    </PublishButton>
  </TopBar>
)

const LayerTree = () => (
  <Navigator>
    <NavigatorHeader>
      <NavigatorTitle>Navigator</NavigatorTitle>
      <NavigatorTools>
        <button aria-label="Collapse all">
          <CollapseIcon />
        </button>
        <button aria-label="Pin panel">
          <PinIcon />
        </button>
      </NavigatorTools>
    </NavigatorHeader>
    <Tree role="tree">
      {LAYERS.map((layer, key) => (
        <TreeRow
          key={key}
          role="treeitem"
          aria-selected={!!layer.selected}
          $depth={layer.depth}
          $selected={layer.selected}
        >
          {layer.depth > 1 && (
            <Guides $count={layer.depth - 1}>
              {Array.from({ length: layer.depth - 1 }, (_, i) => (
                <Guide key={i} />
              ))}
            </Guides>
          )}
          {layer.depth > 0 && (
            <Caret>
              <CaretIcon open={layer.open} />
            </Caret>
          )}
          <TreeIcon $color={layer.color}>{layer.icon}</TreeIcon>
          {layer.name}
        </TreeRow>
      ))}
    </Tree>
  </Navigator>
)

const PricingPage = () => (
  <Canvas>
    <Site>
      <SiteHeader>
        <Logo href="#home">
          <CloudIcon />
          Dataplus X
        </Logo>
        <SiteNav>
          <SiteLink href="#home">Home</SiteLink>
          <SiteLink href="#about">About</SiteLink>
          <SiteLink href="#blog">Blog</SiteLink>
          <SiteLink href="#pages">
            Pages <ChevronIcon />
          </SiteLink>
          <SiteLink href="#pricing" $current>
            Pricing
          </SiteLink>
          <SiteLink href="#cart">Cart(3)</SiteLink>
        </SiteNav>
        <SiteActions>
          <SiteLink href="#login">
            <KeyIcon /> Login
          </SiteLink>
          <PillButton>Get started</PillButton>
        </SiteActions>
      </SiteHeader>

      <Hero>
        <HeroTitle>
          <span>Pricing</span> for everyone.
        </HeroTitle>
        <HeroText>
          Lorem ipsum dolor sit amet, consectetur adipiscing elit lobortis arcu
          enim urna adipiscing praesent velit viverra sit.
        </HeroText>
      </Hero>

      <Cards>
        {PLANS.map((plan) => (
          <Card key={plan.name} $selected={plan.selected}>
            {plan.selected && (
              <SelectionLabel>
                <SquareIcon /> Card
              </SelectionLabel>
            )}
            <PlanIcon $bleed={plan.bleed}>{plan.icon}</PlanIcon>
            <PlanName>{plan.name}</PlanName>
            <PlanPrice>{plan.price}</PlanPrice>
            <PlanText>
              Lorem ipsum dolor sit amet, consectetur adipiscing elit sed do
              eiusmod tempor
            </PlanText>
            <Divider />
            <Features>
              {plan.features.map((feature) => (
                <Feature key={feature}>
                  <CheckIcon />
                  {feature}
                </Feature>
              ))}
            </Features>
            <PlanUsers>{plan.users}</PlanUsers>
            <PillButton $wide>Get started</PillButton>
          </Card>
        ))}
      </Cards>
    </Site>
  </Canvas>
)

const SettingsPanel = () => (
  <Settings>
    <Tabs>
      <Tab aria-label="Style">
        <BrushIcon />
      </Tab>
      <Tab $active aria-label="Element settings">
        <GearIcon size={16} />
      </Tab>
      <Tab aria-label="Style manager">
        <DropsIcon />
      </Tab>
      <Tab aria-label="Interactions">
        <BoltIcon />
      </Tab>
    </Tabs>

    <Panel $pad="7px 7px 9px 8px">
      <PanelTitle>
        <SquareIcon /> Card Settings
      </PanelTitle>
      <CreateButton>
        <BoxIcon size={11} /> Create component
      </CreateButton>
    </Panel>

    <Panel $pad="8px 6px 8px 8px">
      <Field>
        <label htmlFor="element-id">ID</label>
        <TextInput id="element-id" placeholder="For in-page linking" />
      </Field>
      <Field>
        <label htmlFor="element-tag">Tag</label>
        <SelectBox>
          <select id="element-tag" defaultValue="Div">
            <option>Div</option>
            <option>Section</option>
          </select>
          <TriangleIcon />
        </SelectBox>
      </Field>
    </Panel>

    <SectionHeader>
      <TriangleIcon /> Dynamic Style Settings
    </SectionHeader>
    <Panel $pad="8px 6px 12px 8px">
      <StyleRows>
        {DYNAMIC_STYLES.map((name) => (
          <StyleRow key={name}>
            <Checkbox type="checkbox" />
            Get {name} from
            <TagIcon />
            <strong>Products</strong>
          </StyleRow>
        ))}
      </StyleRows>
    </Panel>

    <SectionHeader>
      <TriangleIcon /> Conditional Visibility
    </SectionHeader>
    <Panel $pad="9px 6px 9px 8px">
      <LabelRow>
        Conditions:
        <AddButton $filled aria-label="Add condition">
          <PlusIcon size={8} stroke={2} />
        </AddButton>
      </LabelRow>
      <Well>
        Product - Is Popular? is on
        <button aria-label="Remove condition">
          <TrashIcon />
        </button>
      </Well>
    </Panel>

    <SectionHeader>
      <TriangleIcon /> Custom Attributes
    </SectionHeader>
    <Panel $pad="9px 6px 7px 8px">
      <LabelRow>
        Custom Attributes
        <AddButton aria-label="Add attribute">
          <PlusIcon size={10} stroke={1.5} />
        </AddButton>
      </LabelRow>
      <Well $center>None</Well>
    </Panel>

    <SectionHeader>
      <TriangleIcon /> Search Index Settings
    </SectionHeader>
    <Panel $pad="7px 6px 7px 8px">
      <Exclude>
        <Checkbox type="checkbox" defaultChecked />
        <SearchOffIcon />
        <span>
          Exclude Div Block’s content
          <br />
          from site search results
        </span>
      </Exclude>
    </Panel>
  </Settings>
)

const App = () => (
  <Shell>
    <GlobalStyle />
    <Main>
      <Toolbar />
      <Workspace>
        <Rail>
          {RAIL.map((item) => (
            <RailButton
              key={item.name}
              $height={item.height}
              aria-label={item.name}
            >
              {item.icon}
            </RailButton>
          ))}
          <RailSpace />
          <RailButton $height={40} $last aria-label="Audit">
            <AuditIcon />
          </RailButton>
        </Rail>
        <LayerTree />
        <Gutter />
        <PricingPage />
        <Scrollbar>
          <ScrollArrow>
            <Icon w={6} h={4}>
              <path d="M0 4h6L3 0z" />
            </Icon>
          </ScrollArrow>
          <ScrollThumb />
        </Scrollbar>
      </Workspace>
    </Main>
    <SettingsPanel />
  </Shell>
)

export default App
